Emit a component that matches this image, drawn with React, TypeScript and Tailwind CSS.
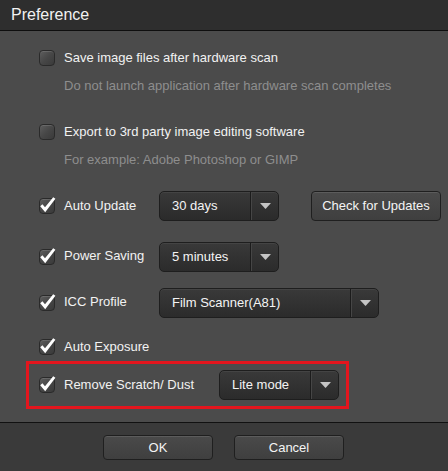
import React from "react";

const font = { fontFamily: '"Liberation Sans", Arial, sans-serif' };

function CheckBox({ checked }: { checked: boolean }) {
  return (
    <div className="relative w-[16px] h-[16px] shrink-0">
      <div className="absolute inset-0 rounded-[4px] border border-[#2a2a2a] bg-gradient-to-br from-[#5e5e5e] via-[#474747] to-[#3a3a3a] shadow-[inset_0_1px_0_rgba(255,255,255,0.12)]" />
      {checked && (
        <svg
          className="absolute left-[0px] top-[-2px]"
          width="17"
          height="18"
          viewBox="0 0 17 18"
        >
          <path
            d="M1.2 10.2 L3.4 8.2 L6 11.2 L14.2 1.2 L16.4 2.8 L6.2 16.2 Z"
            fill="#ffffff"
          />
        </svg>
      )}
    </div>
  );
}

function Dropdown({ value, width, divider }: { value: string; width: number; divider: number }) {
  return (
    <div
      className="flex h-[30px] rounded-[5px] border border-[#1e1e1e] bg-gradient-to-b from-[#393939] to-[#2b2b2b] shadow-[inset_0_1px_0_rgba(255,255,255,0.06)]"
      style={{ width }}
    >
      <div className="flex items-center pl-[12px] text-[13px] text-[#f4f4f4]" style={{ width: divider }}>
        {value}
      </div>
      <div className="w-[1px] bg-[#1c1c1c]" />
      <div className="w-[1px] bg-[#464646]" />
      <div className="flex flex-1 items-center justify-center">
        <svg width="11" height="6" viewBox="0 0 11 6">
          <path d="M0 0 H11 L5.5 6 Z" fill="#c4c4c4" />
        </svg>
      </div>
    </div>
  );
}

function Button({ label, width }: { label: string; width: number }) {
  return (
    <div
      className="flex items-center justify-center rounded-[4px] border border-[#1f1f1f] bg-gradient-to-b from-[#4a4a4a] to-[#3f3f3f] text-[13px] text-[#f4f4f4] shadow-[inset_0_1px_0_rgba(255,255,255,0.1)]"
      style={{ width }}
    >
      {label}
    </div>
  );
}

export default function App() {
  return (
    <div className="w-[448px] h-[471px] flex flex-col bg-[#4b4b4b] overflow-hidden" style={font}>
      <div className="h-[30px] shrink-0 bg-[#2e2e2e] flex items-center pl-[11px] text-[16px] text-[#f2f2f2]">
        Preference
      </div>
      <div className="h-[1px] shrink-0 bg-[#0e0e0e]" />

      <div className="flex-1 flex flex-col pl-[39px]">
        <div className="mt-[17px] h-[20px] flex items-center gap-[9px]">
          <CheckBox checked={false} />
          <span className="text-[13px] text-[#f2f2f2]">Save image files after hardware scan</span>
        </div>
        <div className="mt-[8px] h-[20px] flex items-center pl-[25px] text-[13px] text-[#8e8e8e]">
          Do not launch application after hardware scan completes
        </div>

        <div className="mt-[26px] h-[20px] flex items-center gap-[9px]">
          <CheckBox checked={false} />
          <span className="text-[13px] text-[#f2f2f2]">Export to 3rd party image editing software</span>
        </div>
        <div className="mt-[8px] h-[20px] flex items-center pl-[25px] text-[13px] text-[#8e8e8e]">
          For example: Adobe Photoshop or GIMP
        </div>

        <div className="mt-[21px] h-[30px] flex items-center">
          <CheckBox checked />
          <span className="ml-[9px] w-[95px] text-[13px] text-[#f2f2f2]">Auto Update</span>
          <Dropdown value="30 days" width={120} divider={90} />
          <div className="ml-[32px] h-[30px] flex">
            <Button label="Check for Updates" width={130} />
          </div>
        </div>

        <div className="mt-[21px] h-[30px] flex items-center">
          <CheckBox checked />
          <span className="ml-[9px] w-[95px] text-[13px] text-[#f2f2f2] -mt-[2px]">Power Saving</span>
          <Dropdown value="5 minutes" width={120} divider={90} />
        </div>

        <div className="mt-[16px] h-[30px] flex items-center">
          <CheckBox checked />
          <span className="ml-[9px] w-[95px] text-[13px] text-[#f2f2f2] -mt-[2px]">ICC Profile</span>
          <Dropdown value="Film Scanner(A81)" width={220} divider={190} />
        </div>

        <div className="mt-[19px] h-[20px] flex items-center gap-[9px]">
          <CheckBox checked />
          <span className="text-[13px] text-[#f2f2f2]">Auto Exposure</span>
        </div>
      </div>

      <div className="ml-[26px] mb-[13px] w-[323px] h-[48px] shrink-0 border-[3px] border-[#e3151d] flex items-center pl-[10px]">
        <CheckBox checked />
        <span className="ml-[9px] w-[155px] text-[13px] text-[#f2f2f2]">Remove Scratch/ Dust</span>
        <Dropdown value="Lite mode" width={120} divider={90} />
      </div>

      <div className="h-[1px] shrink-0 bg-[#111111]" />
      <div className="h-[48px] shrink-0 bg-[#3a3a3a] flex justify-center gap-[21px] pt-[12px] pb-[11px] pr-[1px]">
        <Button label="OK" width={110} />
        <Button label="Cancel" width={110} />
      </div>
    </div>
  );
}
